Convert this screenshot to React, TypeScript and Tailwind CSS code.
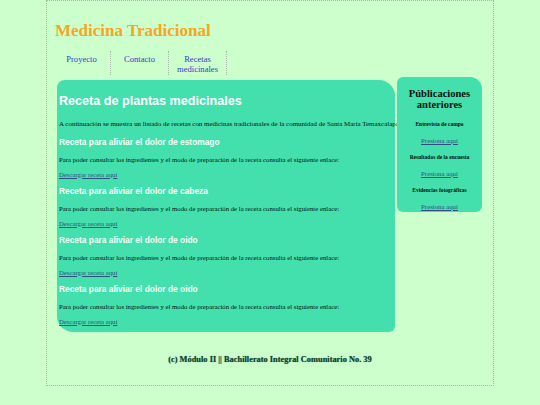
import React from 'react'

const recetas = [
  'Receta para aliviar el dolor de estomago',
  'Receta para aliviar el dolor de cabeza',
  'Receta para aliviar el dolor de oido',
  'Receta para aliviar el dolor de oido',
]

const publicaciones = ['Entrevista de campo', 'Resultados de la encuesta', 'Evidencias fotográficas']

export default function App() {
  return (
    <div className="min-h-[405px] w-[540px] bg-[#ccffcc] font-['Liberation_Serif',serif]">
      <div className="ml-[46px] w-[448px] h-[386px] border border-dotted border-[#a8b8a8] px-[8px]">
        {/* Encabezado */}
        <h1 className="pt-[19px] text-[17px] leading-[22px] font-bold text-[#f5a623]">Medicina Tradicional</h1>

        {/* Navegacion */}
        <nav className="flex mt-[9px] -ml-[2px] text-[8.6px] leading-[10px] text-[#3340c8]">
          {['Proyecto', 'Contacto', 'Recetas medicinales'].map((item, i) => (
            <div
              key={item}
              className="w-[58px] h-[24px] pt-[3px] flex justify-center text-center border-r border-dotted border-[#a8b8a8]"
            >
              <span className={i === 2 ? 'w-[44px]' : ''}>{item}</span>
            </div>
          ))}
        </nav>

        <div className="flex items-start mt-[2px] ml-[2px]">
          {/* Contenido principal */}
          <main className="w-[338px] h-[252px] mt-[3px] bg-[#43e0ae] rounded-tl-lg rounded-tr-2xl rounded-bl-2xl rounded-br-md px-[2px] pt-[14px]">
            <h2 className="font-['Liberation_Sans',sans-serif] font-bold text-white text-[12.6px] leading-[15px]">
              Receta de plantas medicinales
            </h2>
            <p className="mt-[11px] text-[6.95px] leading-[9px] whitespace-nowrap text-[#03100b]">
              A continuación se muestra un listado de recetas con medicinas tradicionales de la comunidad de Santa María Temaxcalapa.
            </p>
            {recetas.map((r, i) => (
              <section key={i} className={i === 0 ? 'mt-[8px]' : 'mt-[7.5px]'}>
                <h3 className="font-['Liberation_Sans',sans-serif] font-bold text-[#f4fff8] text-[8.4px] leading-[10px]">{r}</h3>
                <p className="mt-[7.5px] text-[6.75px] leading-[9px] text-[#03100b]">
                  Para poder consultar los ingredientes y el modo de preparación de la receta consulta el siguiente enlace:
                </p>
                <a href="#" className="block mt-[6px] text-[6.75px] leading-[9px] text-[#2f4f80] underline">
                  Descargar receta aquí
                </a>
              </section>
            ))}
          </main>

          {/* Publicaciones anteriores */}
          <aside className="w-[85px] h-[135px] ml-[2px] bg-[#43e0ae] rounded-tl-md rounded-tr-xl rounded-b-md pt-[11px] text-center text-[#03100b]">
            <h2 className="font-bold text-[10.5px] leading-[11px]">Públicaciones anteriores</h2>
            {publicaciones.map((p, i) => (
              <div key={p}>
                <p className={`${i === 0 ? 'mt-[10.5px]' : 'mt-[9px]'} font-bold text-[5.5px] leading-[6px]`}>{p}</p>
                <a href="#" className="block mt-[10px] text-[6.8px] leading-[8px] text-[#2f4f80] underline">
                  Presiona aquí
                </a>
              </div>
            ))}
          </aside>
        </div>

        {/* Pie */}
        <footer className="mt-[22px] text-center font-bold text-[8.4px] leading-[11px] text-[#14402e] [text-shadow:0_0_1px_#4a8a6a]">
          (c) Módulo II || Bachillerato Integral Comunitario No. 39
        </footer>
      </div>
    </div>
  )
}
